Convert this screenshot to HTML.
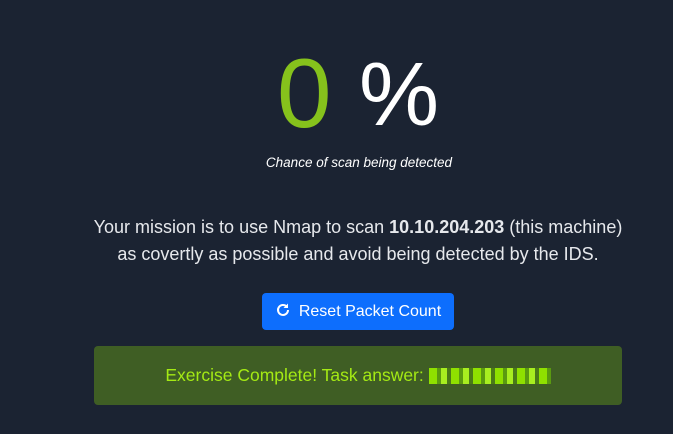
<!DOCTYPE html><html><head><style>
body{margin:0;width:673px;height:434px;background:#1b2332;font-family:"Liberation Sans",sans-serif;color:#e8eaee;position:relative;overflow:hidden}
.z{position:absolute;left:277px;top:38px;font-size:98px;line-height:110px;color:#86c21c}
.pc{position:absolute;left:359px;top:45px;font-size:90px;line-height:100px;color:#fff}
.sub{position:absolute;left:0;width:718px;top:155px;text-align:center;font-size:13.5px;font-style:italic;color:#fff}
.p{position:absolute;left:-1px;width:718px;top:214px;text-align:center;font-size:18px;line-height:27px;color:#e6e8ec}
.btn{position:absolute;left:262px;top:293px;width:192px;height:37px;background:#0d6efd;border-radius:4px;color:#fff;font-size:16px;line-height:37px;text-align:center}
.box{position:absolute;left:94px;top:346px;width:528px;height:59px;background:#3f5e24;border-radius:4px;color:#a4ea14;font-size:17.5px;line-height:59px;text-align:center}
.px{display:inline-block;width:122px;height:16px;vertical-align:middle;background:repeating-linear-gradient(90deg,#8fe000 0 8px,#5a9a10 8px 12px,#a8ee20 12px 18px,#4a7a18 18px 22px)}
</style></head><body>
<div class="z">0</div><div class="pc">%</div>
<div class="sub">Chance of scan being detected</div>
<div class="p">Your mission is to use Nmap to scan <b>10.10.204.203</b> (this machine)<br>as covertly as possible and avoid being detected by the IDS.</div>
<div class="btn"><svg width="16" height="16" viewBox="0 0 16 16" style="vertical-align:-2px;margin-right:8px"><path d="M13 8a5 5 0 1 1-1.5-3.6" fill="none" stroke="#fff" stroke-width="2"/><path d="M13 1.5v4.5h-4.5z" fill="#fff"/></svg>Reset Packet Count</div>
<div class="box">Exercise Complete! Task answer: <span class="px"></span></div>
</body></html>
